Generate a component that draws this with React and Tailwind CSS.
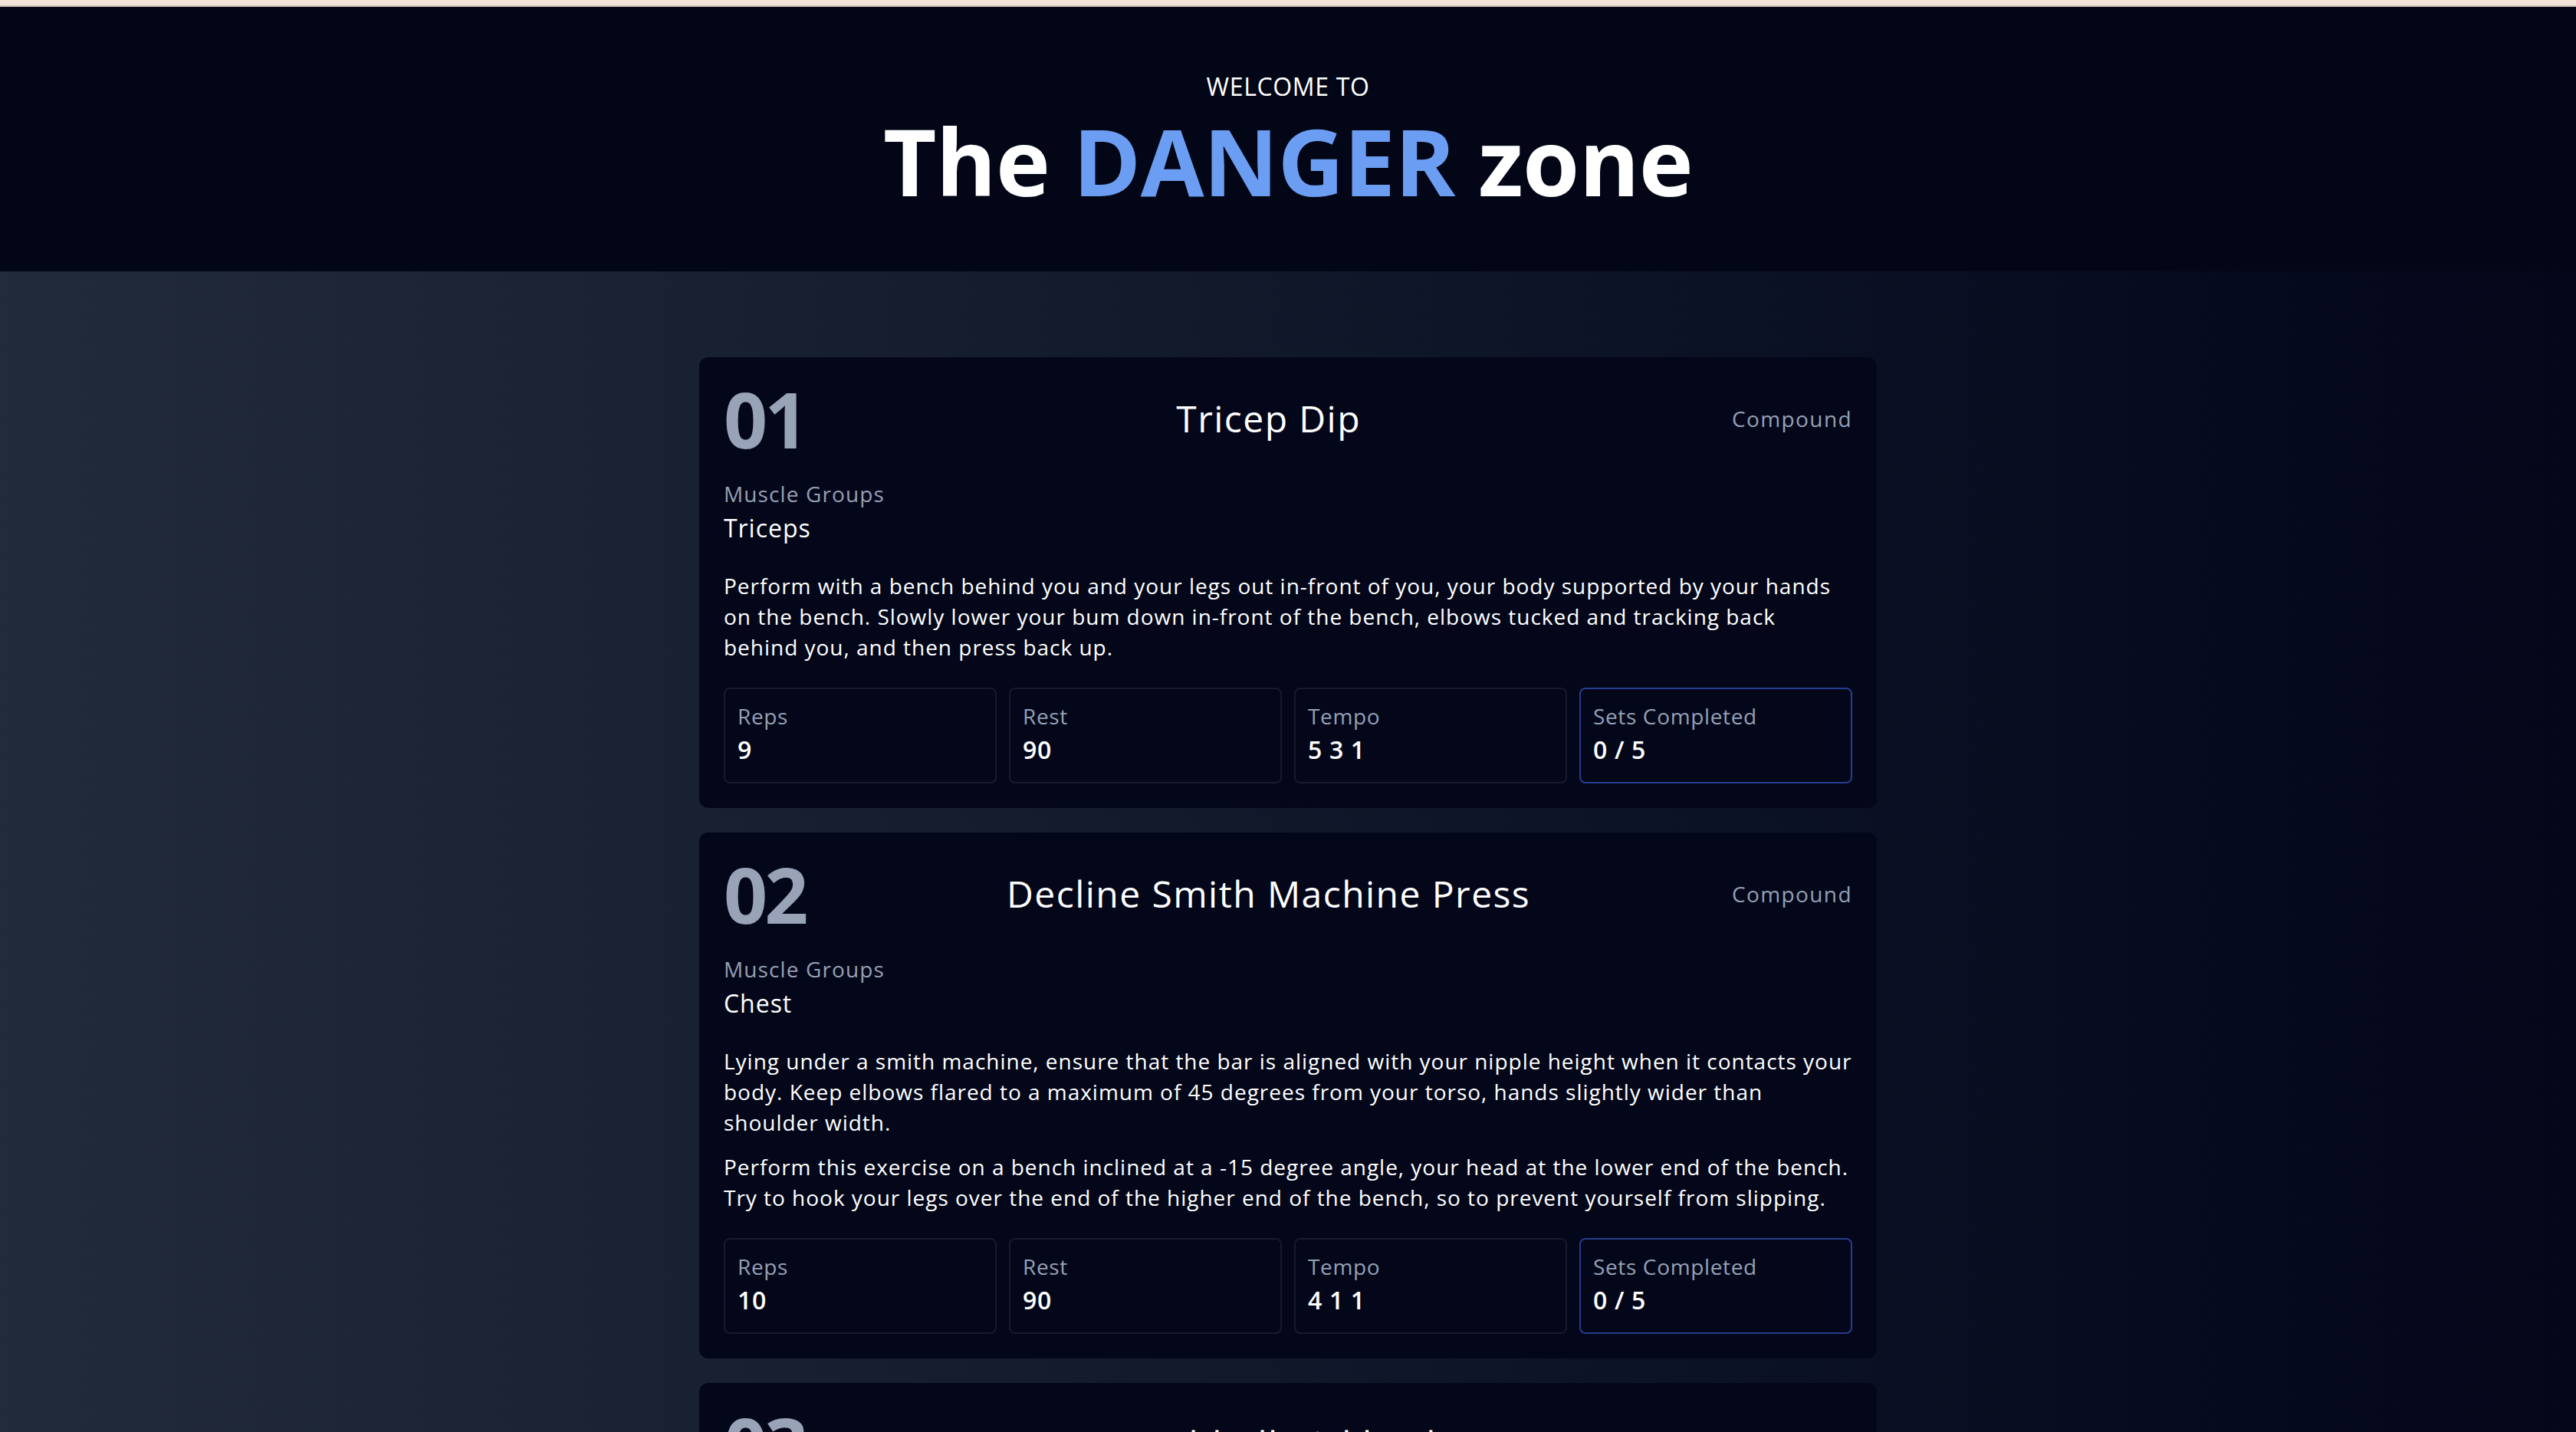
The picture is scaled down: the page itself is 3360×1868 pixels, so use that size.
import { useState } from 'react';

const exercises = [
  {
    id: '01',
    name: 'Tricep Dip',
    type: 'Compound',
    muscles: 'Triceps',
    notes: [
      'Perform with a bench behind you and your legs out in-front of you, your body supported by your hands on the bench. Slowly lower your bum down in-front of the bench, elbows tucked and tracking back behind you, and then press back up.',
    ],
    reps: '9',
    rest: '90',
    tempo: '5 3 1',
    sets: 5,
  },
  {
    id: '02',
    name: 'Decline Smith Machine Press',
    type: 'Compound',
    muscles: 'Chest',
    notes: [
      'Lying under a smith machine, ensure that the bar is aligned with your nipple height when it contacts your body. Keep elbows flared to a maximum of 45 degrees from your torso, hands slightly wider than shoulder width.',
      'Perform this exercise on a bench inclined at a -15 degree angle, your head at the lower end of the bench. Try to hook your legs over the end of the higher end of the bench, so to prevent yourself from slipping.',
    ],
    reps: '10',
    rest: '90',
    tempo: '4 1 1',
    sets: 5,
  },
  {
    id: '03',
    name: 'Dumbbell Kickback',
    type: 'Accessory',
    muscles: 'Triceps',
    notes: [
      'Hinge forward with a flat back, upper arm pinned to your side, and extend the dumbbell back until your arm is straight. Squeeze at the top before lowering under control.',
    ],
    reps: '12',
    rest: '60',
    tempo: '3 1 1',
    sets: 4,
  },
];

function Stat({ label, value, active, onClick }) {
  return (
    <button
      onClick={onClick}
      className={`text-left rounded-[8px] border-2 pt-[15px] pb-[18px] px-[16px] bg-[#04071a] ${
        active ? 'border-[#263c8e]' : 'border-[#161a2a]'
      }`}
    >
      <p className="text-[28px] leading-[40px] text-[#94a0b5]">{label}</p>
      <p className="text-[32px] leading-[48px] font-semibold text-white">{value}</p>
    </button>
  );
}

function ExerciseCard({ ex }) {
  const [done, setDone] = useState(0);

  return (
    <div className="bg-[#04071a] rounded-[12px] p-[32px]">
      <div className="flex items-center justify-between h-[96px]">
        <h3 className="text-[100px] leading-[96px] font-bold text-[#98a3b7] tracking-[-0.04em]">{ex.id}</h3>
        <h2 className="text-[48px] leading-[64px] text-white tracking-[0.03em]">{ex.name}</h2>
        <p className="text-[28px] leading-[40px] text-[#94a0b5] tracking-[0.05em]">{ex.type}</p>
      </div>

      <p className="mt-[30px] text-[28px] leading-[40px] text-[#94a0b5] tracking-[0.04em]">Muscle Groups</p>
      <p className="mt-[1px] text-[32px] leading-[48px] text-white tracking-[0.03em]">{ex.muscles}</p>

      <div className="mt-[31px] flex flex-col gap-[18px]">
        {ex.notes.map((n, i) => (
          <p key={i} className="text-[28px] leading-[40px] text-white font-medium tracking-[0.035em]">
            {n}
          </p>
        ))}
      </div>

      <div className="mt-[33px] grid grid-cols-4 gap-[16px] tracking-[0.04em]">
        <Stat label="Reps" value={ex.reps} />
        <Stat label="Rest" value={ex.rest} />
        <Stat label="Tempo" value={ex.tempo} />
        <Stat
          label="Sets Completed"
          value={`${done} / ${ex.sets}`}
          active
          onClick={() => setDone((d) => (d < ex.sets ? d + 1 : 0))}
        />
      </div>
    </div>
  );
}

export default function App() {
  return (
    <div className="h-screen overflow-y-auto bg-[#04061a]" style={{ fontFamily: '"Open Sans", sans-serif' }}>
      <div className="h-[9px] bg-[#f3e1da] border-b-2 border-[#c9bab4]" />

      <header className="bg-[#030616] h-[345px] pt-[80px] text-center">
        <p className="text-[32px] leading-[48px] font-medium text-white tracking-[0.02em]">WELCOME TO</p>
        <h1 className="mt-[13px] text-[120px] leading-[120px] font-bold text-white tracking-[-0.006em]">
          The <span className="text-[#6b9ef2]">DANGER</span> zone
        </h1>
      </header>

      <main className="bg-linear-to-r from-[#222b3b] to-[#04061a] pt-[112px] pb-[64px]">
        <div className="max-w-[1536px] mx-auto flex flex-col gap-[32px]">
          {exercises.map((ex) => (
            <ExerciseCard key={ex.id} ex={ex} />
          ))}
        </div>
      </main>
    </div>
  );
}
